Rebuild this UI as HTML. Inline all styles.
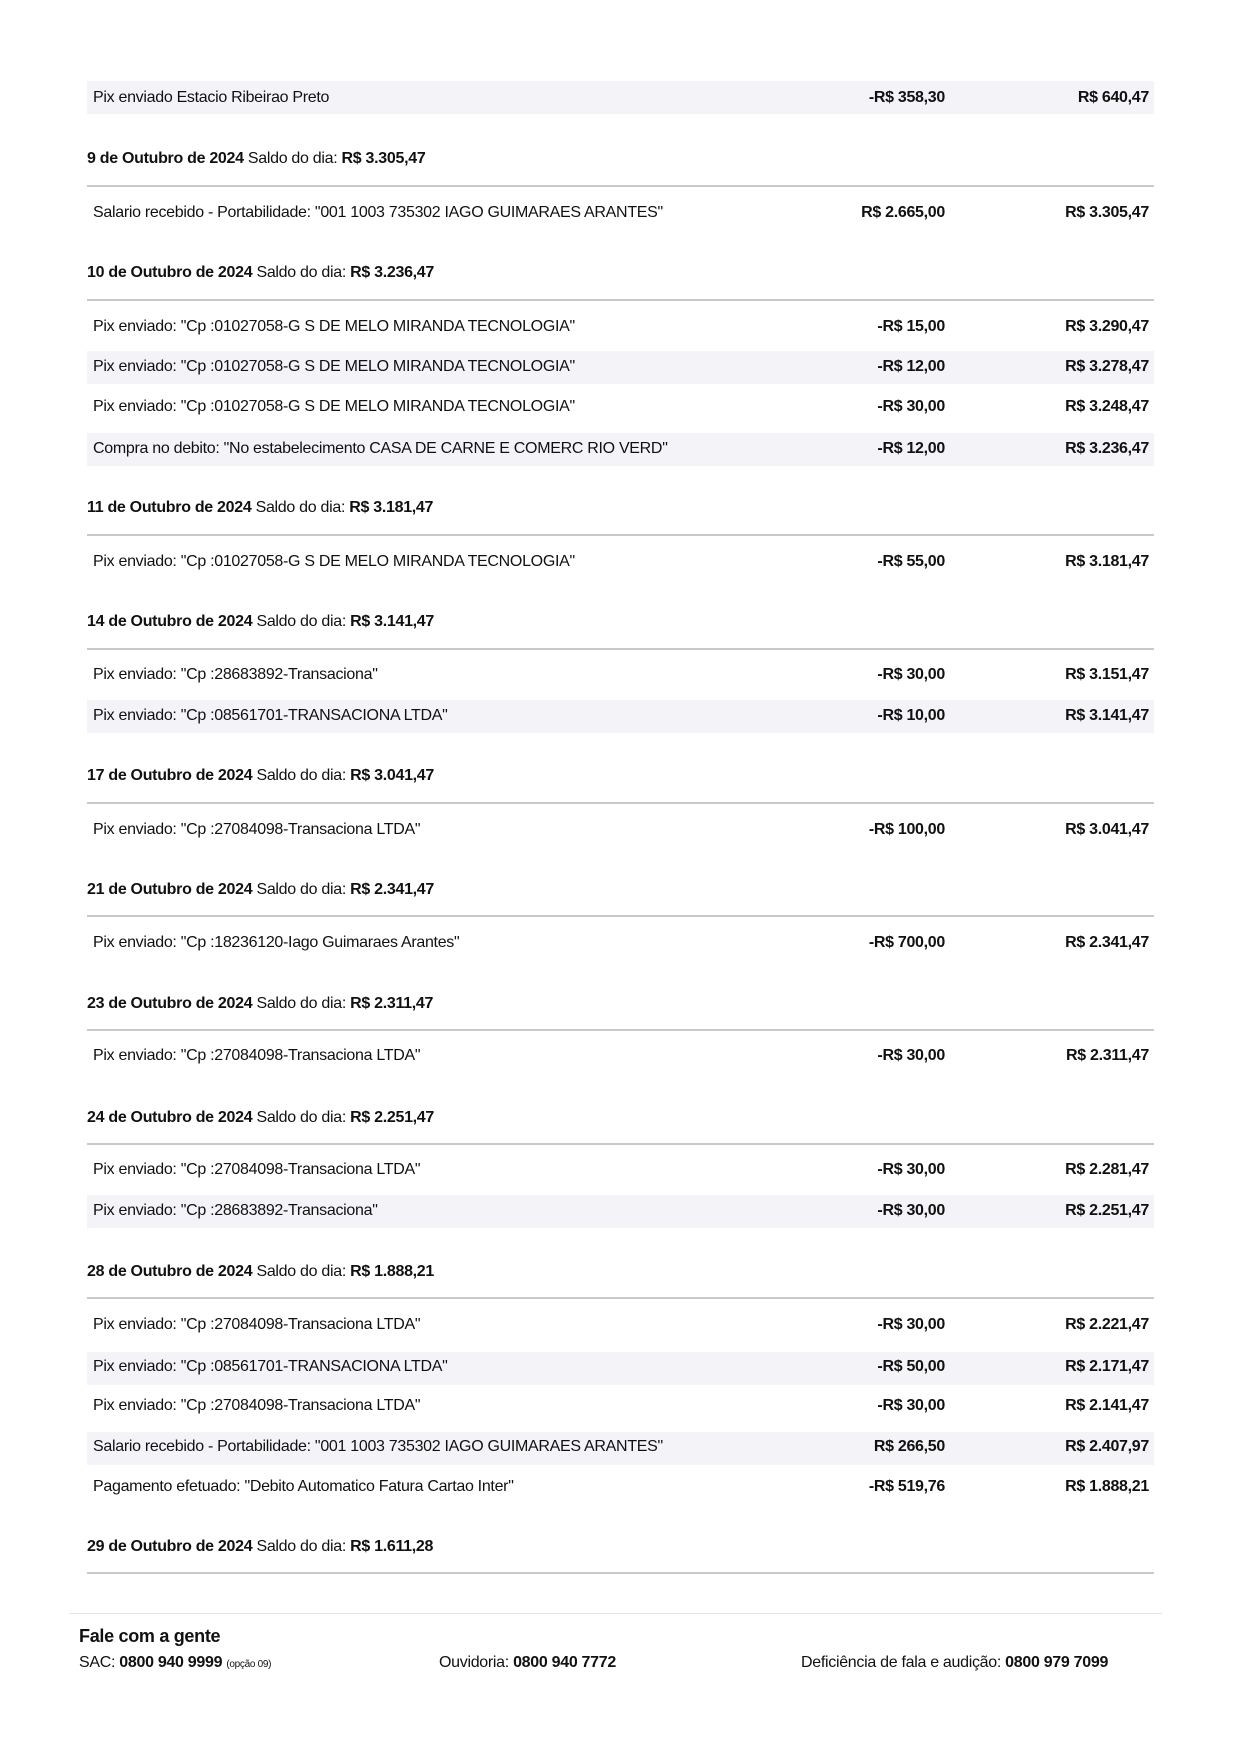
<!DOCTYPE html>
<html><head><meta charset="utf-8"><style>
html,body{margin:0;padding:0;background:#fff;}
body{width:1240px;height:1754px;position:relative;overflow:hidden;font-family:"Liberation Sans",Arial,sans-serif;color:#111;font-size:16px;letter-spacing:-0.3px;}
.a{position:absolute;line-height:18px;white-space:nowrap;}
.d{left:93px;}
.h{left:87px;}
.m{right:295px;font-weight:bold;text-align:right;}
.b{right:91px;font-weight:bold;text-align:right;}
.s{position:absolute;left:87px;width:1067px;height:33px;background:#f4f4f8;}
.l{position:absolute;left:87px;width:1067px;height:2px;background:#c9c9c9;}
b{font-weight:bold;}
</style></head><body>
<div class="s" style="top:81px"></div>
<div class="a d" style="top:89px">Pix enviado Estacio Ribeirao Preto</div><div class="a m" style="top:89px">-R$ 358,30</div><div class="a b" style="top:89px">R$ 640,47</div>

<div class="a h" style="top:150px"><b>9 de Outubro de 2024</b> Saldo do dia: <b>R$ 3.305,47</b></div><div class="l" style="top:185px"></div>
<div class="a d" style="top:204px">Salario recebido - Portabilidade: "001 1003 735302 IAGO GUIMARAES ARANTES"</div><div class="a m" style="top:204px">R$ 2.665,00</div><div class="a b" style="top:204px">R$ 3.305,47</div>

<div class="a h" style="top:264px"><b>10 de Outubro de 2024</b> Saldo do dia: <b>R$ 3.236,47</b></div><div class="l" style="top:299px"></div>
<div class="a d" style="top:318px">Pix enviado: "Cp :01027058-G S DE MELO MIRANDA TECNOLOGIA"</div><div class="a m" style="top:318px">-R$ 15,00</div><div class="a b" style="top:318px">R$ 3.290,47</div>
<div class="s" style="top:351px"></div>
<div class="a d" style="top:358px">Pix enviado: "Cp :01027058-G S DE MELO MIRANDA TECNOLOGIA"</div><div class="a m" style="top:358px">-R$ 12,00</div><div class="a b" style="top:358px">R$ 3.278,47</div>
<div class="a d" style="top:398px">Pix enviado: "Cp :01027058-G S DE MELO MIRANDA TECNOLOGIA"</div><div class="a m" style="top:398px">-R$ 30,00</div><div class="a b" style="top:398px">R$ 3.248,47</div>
<div class="s" style="top:433px"></div>
<div class="a d" style="top:440px">Compra no debito: "No estabelecimento CASA DE CARNE E COMERC RIO VERD"</div><div class="a m" style="top:440px">-R$ 12,00</div><div class="a b" style="top:440px">R$ 3.236,47</div>

<div class="a h" style="top:499px"><b>11 de Outubro de 2024</b> Saldo do dia: <b>R$ 3.181,47</b></div><div class="l" style="top:534px"></div>
<div class="a d" style="top:553px">Pix enviado: "Cp :01027058-G S DE MELO MIRANDA TECNOLOGIA"</div><div class="a m" style="top:553px">-R$ 55,00</div><div class="a b" style="top:553px">R$ 3.181,47</div>

<div class="a h" style="top:613px"><b>14 de Outubro de 2024</b> Saldo do dia: <b>R$ 3.141,47</b></div><div class="l" style="top:648px"></div>
<div class="a d" style="top:666px">Pix enviado: "Cp :28683892-Transaciona"</div><div class="a m" style="top:666px">-R$ 30,00</div><div class="a b" style="top:666px">R$ 3.151,47</div>
<div class="s" style="top:700px"></div>
<div class="a d" style="top:707px">Pix enviado: "Cp :08561701-TRANSACIONA LTDA"</div><div class="a m" style="top:707px">-R$ 10,00</div><div class="a b" style="top:707px">R$ 3.141,47</div>

<div class="a h" style="top:767px"><b>17 de Outubro de 2024</b> Saldo do dia: <b>R$ 3.041,47</b></div><div class="l" style="top:802px"></div>
<div class="a d" style="top:821px">Pix enviado: "Cp :27084098-Transaciona LTDA"</div><div class="a m" style="top:821px">-R$ 100,00</div><div class="a b" style="top:821px">R$ 3.041,47</div>

<div class="a h" style="top:881px"><b>21 de Outubro de 2024</b> Saldo do dia: <b>R$ 2.341,47</b></div><div class="l" style="top:915px"></div>
<div class="a d" style="top:934px">Pix enviado: "Cp :18236120-Iago Guimaraes Arantes"</div><div class="a m" style="top:934px">-R$ 700,00</div><div class="a b" style="top:934px">R$ 2.341,47</div>

<div class="a h" style="top:995px"><b>23 de Outubro de 2024</b> Saldo do dia: <b>R$ 2.311,47</b></div><div class="l" style="top:1029px"></div>
<div class="a d" style="top:1047px">Pix enviado: "Cp :27084098-Transaciona LTDA"</div><div class="a m" style="top:1047px">-R$ 30,00</div><div class="a b" style="top:1047px">R$ 2.311,47</div>

<div class="a h" style="top:1109px"><b>24 de Outubro de 2024</b> Saldo do dia: <b>R$ 2.251,47</b></div><div class="l" style="top:1143px"></div>
<div class="a d" style="top:1161px">Pix enviado: "Cp :27084098-Transaciona LTDA"</div><div class="a m" style="top:1161px">-R$ 30,00</div><div class="a b" style="top:1161px">R$ 2.281,47</div>
<div class="s" style="top:1195px"></div>
<div class="a d" style="top:1202px">Pix enviado: "Cp :28683892-Transaciona"</div><div class="a m" style="top:1202px">-R$ 30,00</div><div class="a b" style="top:1202px">R$ 2.251,47</div>

<div class="a h" style="top:1263px"><b>28 de Outubro de 2024</b> Saldo do dia: <b>R$ 1.888,21</b></div><div class="l" style="top:1297px"></div>
<div class="a d" style="top:1316px">Pix enviado: "Cp :27084098-Transaciona LTDA"</div><div class="a m" style="top:1316px">-R$ 30,00</div><div class="a b" style="top:1316px">R$ 2.221,47</div>
<div class="s" style="top:1352px"></div>
<div class="a d" style="top:1358px">Pix enviado: "Cp :08561701-TRANSACIONA LTDA"</div><div class="a m" style="top:1358px">-R$ 50,00</div><div class="a b" style="top:1358px">R$ 2.171,47</div>
<div class="a d" style="top:1397px">Pix enviado: "Cp :27084098-Transaciona LTDA"</div><div class="a m" style="top:1397px">-R$ 30,00</div><div class="a b" style="top:1397px">R$ 2.141,47</div>
<div class="s" style="top:1432px"></div>
<div class="a d" style="top:1438px">Salario recebido - Portabilidade: "001 1003 735302 IAGO GUIMARAES ARANTES"</div><div class="a m" style="top:1438px">R$ 266,50</div><div class="a b" style="top:1438px">R$ 2.407,97</div>
<div class="a d" style="top:1478px">Pagamento efetuado: "Debito Automatico Fatura Cartao Inter"</div><div class="a m" style="top:1478px">-R$ 519,76</div><div class="a b" style="top:1478px">R$ 1.888,21</div>

<div class="a h" style="top:1538px"><b>29 de Outubro de 2024</b> Saldo do dia: <b>R$ 1.611,28</b></div><div class="l" style="top:1572px"></div>

<div style="position:absolute;left:69px;width:1093px;top:1613px;height:1px;background:#e4e4e8"></div>
<div class="a" style="left:79px;top:1627px;font-size:18px;font-weight:bold;">Fale com a gente</div>
<div class="a" style="left:79px;top:1654px;">SAC: <b>0800 940 9999</b> <span style="font-size:10px">(opção 09)</span></div>
<div class="a" style="left:439px;top:1654px;">Ouvidoria: <b>0800 940 7772</b></div>
<div class="a" style="left:801px;top:1654px;">Deficiência de fala e audição: <b>0800 979 7099</b></div>
</body></html>
